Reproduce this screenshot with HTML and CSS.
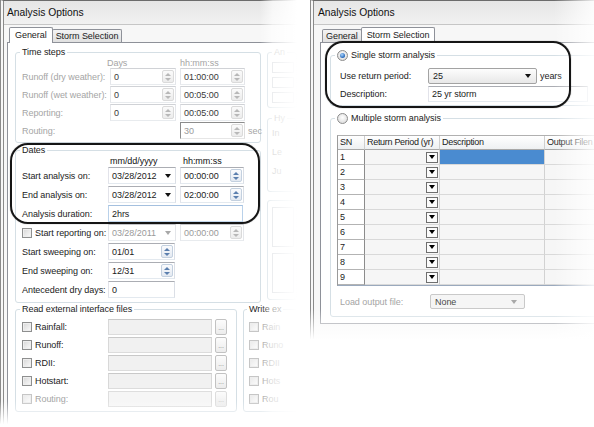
FILE: index.html
```html
<!DOCTYPE html>
<html lang="en">
<head>
<meta charset="utf-8">
<title>Analysis Options</title>
<link rel="stylesheet" href="styles.css">
</head>
<body>
<div class="stage">

  <div class="wrap wrap-l">
    <section class="dlg dlg-l">
      <div class="titlebar">Analysis Options</div>
      <div class="client">
        <div class="tabs">
          <div class="tab active">General</div>
          <div class="tab">Storm Selection</div>
        </div>
        <div class="page page-l">
          <div class="top-area">
            <div class="col-main">
              <div class="grp grp-time">
                <div class="grp-title">Time steps</div>
                <div class="hdr dis"><span class="lbl lbl-ts"></span><span class="hcol hc-days">Days</span><span class="hcol hc-time">hh:mm:ss</span></div>
                <div class="rows rows-ts">
                  <div class="row">
                    <span class="lbl lbl-ts dis">Runoff (dry weather):</span>
                    <div class="field off f-days"><span>0</span><span class="spin off"><i class="up"></i><i class="dn"></i></span></div>
                    <div class="field off f-time"><span>01:00:00</span><span class="spin off"><i class="up"></i><i class="dn"></i></span></div>
                  </div>
                  <div class="row">
                    <span class="lbl lbl-ts dis">Runoff (wet weather):</span>
                    <div class="field off f-days"><span>0</span><span class="spin off"><i class="up"></i><i class="dn"></i></span></div>
                    <div class="field off f-time"><span>00:05:00</span><span class="spin off"><i class="up"></i><i class="dn"></i></span></div>
                  </div>
                  <div class="row">
                    <span class="lbl lbl-ts dis">Reporting:</span>
                    <div class="field off f-days"><span>0</span><span class="spin off"><i class="up"></i><i class="dn"></i></span></div>
                    <div class="field off f-time"><span>00:05:00</span><span class="spin off"><i class="up"></i><i class="dn"></i></span></div>
                  </div>
                  <div class="row">
                    <span class="lbl lbl-ts dis">Routing:</span>
                    <span class="slot-days"></span>
                    <div class="field sunk f-time"><span class="dim">30</span><span class="spin off"><i class="up"></i><i class="dn"></i></span></div>
                    <span class="unit dis">sec</span>
                  </div>
                </div>
              </div>

              <div class="grp grp-dates">
                <div class="grp-title">Dates</div>
                <div class="hdr hdr-dt"><span class="lbl lbl-dt"></span><span class="hcol hc-date">mm/dd/yyyy</span><span class="hcol hc-time2">hh:mm:ss</span></div>
                <div class="rows rows-dt">
                  <div class="row">
                    <span class="lbl lbl-dt">Start analysis on:</span>
                    <div class="field f-date"><span>03/28/2012</span><span class="dd"></span></div>
                    <div class="field f-time2"><span>00:00:00</span><span class="spin"><i class="up"></i><i class="dn"></i></span></div>
                  </div>
                  <div class="row">
                    <span class="lbl lbl-dt">End analysis on:</span>
                    <div class="field f-date"><span>03/28/2012</span><span class="dd"></span></div>
                    <div class="field f-time2"><span>02:00:00</span><span class="spin"><i class="up"></i><i class="dn"></i></span></div>
                  </div>
                  <div class="row">
                    <span class="lbl lbl-dt">Analysis duration:</span>
                    <div class="field f-dur"><span>2hrs</span></div>
                  </div>
                  <div class="row">
                    <span class="lbl lbl-dt"><span class="chk"></span>Start reporting on:</span>
                    <div class="field off f-date"><span class="dim">03/28/2011</span><span class="dd off"></span></div>
                    <div class="field off f-time2"><span class="dim">00:00:00</span><span class="spin off"><i class="up"></i><i class="dn"></i></span></div>
                  </div>
                  <div class="row">
                    <span class="lbl lbl-dt">Start sweeping on:</span>
                    <div class="field f-sweep"><span>01/01</span><span class="spin"><i class="up"></i><i class="dn"></i></span></div>
                  </div>
                  <div class="row">
                    <span class="lbl lbl-dt">End sweeping on:</span>
                    <div class="field f-sweep"><span>12/31</span><span class="spin"><i class="up"></i><i class="dn"></i></span></div>
                  </div>
                  <div class="row">
                    <span class="lbl lbl-dt">Antecedent dry days:</span>
                    <div class="field f-sweep"><span>0</span></div>
                  </div>
                </div>
              </div>
            </div>

            <div class="col-side">
              <div class="grp grp-side">
                <div class="grp-title dis">An</div>
                <div class="sbox"></div>
                <div class="sbox"></div>
                <div class="sbox"></div>
              </div>
              <div class="grp grp-side grp-side2">
                <div class="grp-title dis">Hy</div>
                <div class="sline dis">In</div>
                <div class="sline dis">Le</div>
                <div class="sline dis">Ju</div>
              </div>
              <div class="grp grp-side grp-side3">
                <div class="sbox tall"></div>
                <div class="sbox tall"></div>
              </div>
            </div>
          </div>

          <div class="bottom-area">
            <div class="grp grp-read">
              <div class="grp-title">Read external interface files</div>
              <div class="rows rows-rd">
                <div class="row row-rd"><span class="lbl lbl-rd"><span class="chk"></span>Rainfall:</span><div class="field f-file"></div><span class="btn">...</span></div>
                <div class="row row-rd"><span class="lbl lbl-rd"><span class="chk"></span>Runoff:</span><div class="field f-file"></div><span class="btn">...</span></div>
                <div class="row row-rd"><span class="lbl lbl-rd"><span class="chk"></span>RDII:</span><div class="field f-file"></div><span class="btn">...</span></div>
                <div class="row row-rd"><span class="lbl lbl-rd"><span class="chk"></span>Hotstart:</span><div class="field f-file"></div><span class="btn">...</span></div>
                <div class="row row-rd"><span class="lbl lbl-rd dis"><span class="chk off"></span>Routing:</span><div class="field f-file off"></div><span class="btn off">...</span></div>
              </div>
            </div>
            <div class="grp grp-write">
              <div class="grp-title">Write ex</div>
              <div class="rows rows-rd">
                <div class="row row-rd"><span class="lbl dis"><span class="chk off"></span>Rain</span></div>
                <div class="row row-rd"><span class="lbl dis"><span class="chk off"></span>Runo</span></div>
                <div class="row row-rd"><span class="lbl dis"><span class="chk off"></span>RDII</span></div>
                <div class="row row-rd"><span class="lbl dis"><span class="chk off"></span>Hots</span></div>
                <div class="row row-rd"><span class="lbl dis"><span class="chk off"></span>Rou</span></div>
              </div>
            </div>
          </div>
        </div>
      </div>
    </section>
    <div class="fade fade-r"></div>
    <div class="fade fade-b"></div>
    <div class="hl hl-l"></div>
  </div>

  <div class="wrap wrap-r">
    <section class="dlg dlg-r">
      <div class="titlebar">Analysis Options</div>
      <div class="client">
        <div class="tabs">
          <div class="tab">General</div>
          <div class="tab active">Storm Selection</div>
        </div>
        <div class="page page-r">
          <div class="grp grp-single">
            <div class="grp-title gt-radio"><span class="radio on"></span>Single storm analysis</div>
            <div class="rows rows-ss">
              <div class="row row-ss">
                <span class="lbl lbl-ss">Use return period:</span>
                <div class="select"><span>25</span><span class="dd"></span></div>
                <span class="unit">years</span>
              </div>
              <div class="row row-ss">
                <span class="lbl lbl-ss">Description:</span>
                <div class="field f-desc"><span>25 yr storm</span></div>
              </div>
            </div>
          </div>

          <div class="grp grp-multi">
            <div class="grp-title gt-radio2"><span class="radio"></span>Multiple storm analysis</div>
            <div class="grid">
              <div class="gh">SN</div><div class="gh">Return Period (yr)</div><div class="gh">Description</div><div class="gh">Output Filen</div>
              <div class="gc sn">1</div><div class="gc rp"><span class="ddb"></span></div><div class="gc sel"></div><div class="gc"></div>
              <div class="gc sn">2</div><div class="gc rp"><span class="ddb"></span></div><div class="gc"></div><div class="gc"></div>
              <div class="gc sn">3</div><div class="gc rp"><span class="ddb"></span></div><div class="gc"></div><div class="gc"></div>
              <div class="gc sn">4</div><div class="gc rp"><span class="ddb"></span></div><div class="gc"></div><div class="gc"></div>
              <div class="gc sn">5</div><div class="gc rp"><span class="ddb"></span></div><div class="gc"></div><div class="gc"></div>
              <div class="gc sn">6</div><div class="gc rp"><span class="ddb"></span></div><div class="gc"></div><div class="gc"></div>
              <div class="gc sn">7</div><div class="gc rp"><span class="ddb"></span></div><div class="gc"></div><div class="gc"></div>
              <div class="gc sn">8</div><div class="gc rp"><span class="ddb"></span></div><div class="gc"></div><div class="gc"></div>
              <div class="gc sn">9</div><div class="gc rp"><span class="ddb"></span></div><div class="gc"></div><div class="gc"></div>
            </div>
            <div class="row row-load">
              <span class="lbl lbl-lo dis">Load output file:</span>
              <div class="select off"><span>None</span><span class="dd off"></span></div>
            </div>
          </div>
        </div>
      </div>
    </section>
    <div class="fade fade-r"></div>
    <div class="fade fade-b"></div>
    <div class="hl hl-r"></div>
  </div>

</div>
</body>
</html>
```

FILE: styles.css
```css
* { box-sizing: border-box; }
html, body { margin: 0; padding: 0; }
body {
  width: 594px; height: 427px; overflow: hidden; background: #fff;
  font-family: "Liberation Sans", Arial, sans-serif;
  font-size: 9px; line-height: 12px; color: #1b1b1b; letter-spacing: -0.05px;
}
.stage { display: flex; align-items: flex-start; width: 594px; height: 427px; overflow: hidden; }

.wrap { position: relative; flex: none; overflow: hidden; }
.wrap-l { width: 302px; height: 427px; }
.wrap-r { width: 284px; height: 345px; margin-left: 8px; }

.dlg {
  width: 310px; height: 100%;
  border-left: 4px double #8a8a8a; border-top: 1px solid #6c6c6c;
  background: #f7f7f7; overflow: hidden;
}
.titlebar {
  height: 24px; border-bottom: 1px solid #c6c6c6;
  background: linear-gradient(#e6e6e6, #f1f1f1);
  display: flex; align-items: center; padding-left: 3px;
  font-size: 10.3px; color: #111; white-space: nowrap; letter-spacing: 0;
}
.dlg-r .titlebar { padding-left: 4px; }
.client { padding-left: 3px; }
.dlg-r .client { padding-left: 6px; }

.tabs { display: flex; align-items: flex-end; height: 17px; padding-left: 2px; }
.tab {
  height: 13px; padding: 0 3px; border: 1px solid #8e9199; border-bottom: none;
  border-radius: 2px 2px 0 0; background: linear-gradient(#f4f4f4, #e0e0e0);
  line-height: 12px; margin-right: -1px; white-space: nowrap;
}
.tab.active {
  position: relative; z-index: 1; height: 16px; margin-bottom: -1px;
  background: #fff; padding: 1px 5px 0;
}
.page { background: #fff; border: 1px solid #8e9199; }
.page-l { padding: 9px 0 0 7px; height: 400px; }
.page-r { padding: 12px 0 6px 9px; }

/* group boxes */
.grp { border: 1px solid #d5dfe5; border-radius: 3px; flex: none; }
.grp-title {
  width: max-content; margin: -7px 0 0 -2px; padding: 0 2px; height: 12px;
  line-height: 12px; background: #fff; white-space: nowrap;
  display: flex; align-items: center;
}
.dis { color: #a5a5a5; }
.dim { color: #9a9a9a; }

.top-area, .bottom-area { display: flex; width: max-content; }
.col-main { width: 246px; flex: none; }
.grp-time { padding: 0 6px 3px; }
.grp-dates { padding: 0 6px 4px; margin-top: 7px; }

.hdr { display: flex; height: 10px; line-height: 10px; white-space: nowrap; }
.hdr-dt { height: 11px; line-height: 11px; color: #111; }
.hcol { flex: none; }
.hc-days { width: 70px; margin-left: -3px; }
.hc-time { padding-left: 3px; }
.hc-date { width: 72px; padding-left: 2px; }
.hc-time2 { padding-left: 3px; }

.rows { display: flex; flex-direction: column; }
.rows-ts { gap: 1px; }
.rows-dt { gap: 2px; }
.row { display: flex; align-items: center; height: 17px; white-space: nowrap; }
.lbl { display: flex; align-items: center; flex: none; }
.lbl-ts { width: 88px; }
.lbl-dt { width: 86px; }
.lbl-rd { width: 86px; }
.slot-days { width: 70px; flex: none; }
.unit { margin-left: 3px; }

/* text fields */
.field {
  display: flex; align-items: center; justify-content: space-between; flex: none;
  height: 17px; padding: 0 1px 0 3px; background: #fff;
  border: 1px solid; border-color: #abadb3 #dbdfe6 #e3e9ef #e2e3ea;
  color: #1b1b1b;
}
.field.off { border-color: #d0d2d6 #e4e6ea #e8ebee #e4e6ea; color: #3a3a3a; }
.field.sunk { border-color: #8c8c8c #dedede #e6e6e6 #8c8c8c; }
.f-days { width: 66px; margin-right: 4px; }
.f-time { width: 65px; }
.f-date { width: 68px; margin-right: 4px; }
.f-time2 { width: 64px; }
.f-dur { width: 135px; border-color: #a4c0df #b9d1ea #c5d9ee #b9d1ea; }
.f-sweep { width: 67px; }
.f-file { width: 104px; height: 16px; background: #f1f1f1; border-color: #c9c9c9 #d8d8d8 #dcdcdc #d8d8d8; }
.f-file.off { background: #f6f6f6; border-color: #dedede; }
.f-desc { width: 160px; height: 16px; }

.spin {
  display: flex; flex-direction: column; justify-content: center; align-items: center;
  gap: 2px; width: 12px; height: 13px; border: 1px solid #c3d0df; border-radius: 2px;
  background: linear-gradient(#fafbfd, #e3e9f1); flex: none;
}
.spin i { display: block; width: 0; height: 0; border-left: 3px solid transparent; border-right: 3px solid transparent; }
.spin .up { border-bottom: 3px solid #5b7fae; }
.spin .dn { border-top: 3px solid #5b7fae; }
.spin.off { border-color: #dadada; background: linear-gradient(#fbfbfb, #ececec); }
.spin.off .up { border-bottom-color: #b8b8b8; }
.spin.off .dn { border-top-color: #b8b8b8; }

.dd {
  width: 0; height: 0; flex: none; margin-right: 3px;
  border-left: 3.5px solid transparent; border-right: 3.5px solid transparent;
  border-top: 4px solid #111;
}
.dd.off { border-top-color: #a8a8a8; }

.chk {
  width: 10px; height: 10px; flex: none; margin-right: 3px;
  border: 1px solid #8e8f8f; background: linear-gradient(135deg, #d6d6d6, #fbfbfb);
  box-shadow: inset 0 0 0 1px #eeeeee;
}
.chk.off { border-color: #c6c6c6; background: linear-gradient(135deg, #e9e9e9, #fdfdfd); }

.btn {
  width: 12px; height: 16px; margin-left: 3px; flex: none;
  border: 1px solid #c2c2c2; border-radius: 2px; background: linear-gradient(#fcfcfc, #ececec);
  font-size: 7px; line-height: 8px; color: #8a8a8a; text-align: center; padding-top: 4px;
}
.btn.off { border-color: #dddddd; color: #c4c4c4; }

/* left dialog: side column and bottom */
.col-side { width: 30px; margin-left: 6px; flex: none; }
.grp-side { padding: 0 4px 4px; }
.grp-side .grp-title { margin-left: 0; }
.sbox { width: 22px; height: 11px; border: 1px solid #c8ccd2; margin-top: 4px; }
.sbox.tall { height: 40px; margin-top: 6px; }
.grp-side2 { margin-top: 10px; padding-bottom: 10px; }
.sline { height: 19px; line-height: 19px; white-space: nowrap; }
.grp-side3 { margin-top: 8px; padding-bottom: 6px; }

.bottom-area { margin-top: 6px; }
.grp-read { width: 222px; padding: 0 6px 4px; }
.grp-write { width: 56px; margin-left: 6px; padding: 0 5px 4px; }
.rows-rd { gap: 2px; margin-top: 4px; }
.row-rd { height: 16px; }

/* right dialog */
.grp-single { width: 300px; padding: 0 0 3px 9px; }
.gt-radio { margin-left: -5px; }
.rows-ss { gap: 2px; margin-top: 7px; }
.row-ss { height: 16px; }
.lbl-ss { width: 88px; }
.select {
  display: flex; align-items: center; justify-content: space-between; flex: none;
  width: 109px; height: 16px; padding: 0 2px 0 4px;
  border: 1px solid #a3a3a3; border-radius: 2px; background: linear-gradient(#fdfdfd, #e8e8e8);
}
.select.off { width: 95px; height: 15px; border-color: #c9c9c9; background: #f5f5f5; color: #4a4a4a; padding-right: 4px; }

.grp-multi { width: 300px; margin-top: 12px; padding: 0 0 7px 6px; }
.gt-radio2 { margin-left: -2px; }
.radio {
  width: 11px; height: 11px; border-radius: 50%; flex: none; margin-right: 3px;
  border: 1px solid #8c8c8c; background: radial-gradient(circle at 50% 40%, #ffffff 0, #d4d4d4 100%);
  display: flex; align-items: center; justify-content: center;
}
.radio.on::after {
  content: ""; width: 5px; height: 5px; border-radius: 50%;
  background: radial-gradient(circle at 40% 35%, #a9d6ff 0, #2566b8 70%);
}

.grid {
  display: grid; grid-template-columns: 27px 75px 105px 120px;
  grid-template-rows: 14px repeat(9, 15px);
  width: max-content; margin-top: 11px;
  border-left: 1px solid #9a9a9a; border-top: 1px solid #b0b0b0; border-bottom: 1px solid #9aa9bd;
}
.gh {
  border-right: 1px solid #cfcfcf; border-bottom: 1px solid #a8a8a8;
  background: linear-gradient(#ffffff, #eef0f2); padding-left: 2px; line-height: 13px; white-space: nowrap;
  letter-spacing: -0.3px;
}
.gc { border-right: 1px solid #d2d2d2; border-bottom: 1px solid #d9d9d9; background: #f6f6f6; }
.gc.sn { background: #fff; border-right-color: #8c8c8c; border-bottom-color: #b3b3b3; padding-left: 2px; line-height: 14px; }
.gc.rp { display: flex; align-items: center; justify-content: flex-end; padding-right: 1px; }
.gc.sel { background: #4a8bd0; }
.ddb {
  width: 12px; height: 11px; border: 1px solid #6f6f6f; background: #fbfbfb;
  display: flex; align-items: center; justify-content: center;
}
.ddb::after {
  content: ""; width: 0; height: 0;
  border-left: 3.5px solid transparent; border-right: 3.5px solid transparent; border-top: 4px solid #000;
}
.row-load { height: 15px; margin-top: 8px; }
.lbl-lo { width: 90px; margin-left: 3px; }

/* overlays */
.fade { position: absolute; z-index: 5; pointer-events: none; }
.wrap-l .fade-r { top: 0; right: 0; width: 42px; height: 100%; background: linear-gradient(to right, rgba(255,255,255,0), rgba(255,255,255,.65) 30%, #fff 88%); }
.wrap-l .fade-b { left: 0; bottom: 0; width: 100%; height: 26px; background: linear-gradient(rgba(255,255,255,0), #fff 90%); }
.wrap-r .fade-r { top: 0; right: 0; width: 40px; height: 100%; background: linear-gradient(to right, rgba(255,255,255,0), rgba(255,255,255,.55) 60%, rgba(255,255,255,.85)); }
.wrap-r .fade-b { left: 0; bottom: 0; width: 100%; height: 36px; background: linear-gradient(rgba(255,255,255,0), #fff 85%); }

.hl {
  position: absolute; z-index: 6; border: 2px solid #151515; border-radius: 18px;
  box-shadow: 0 0 1px rgba(0,0,0,.6);
}
.hl-l { left: 10px; top: 143px; width: 250px; height: 81px; }
.hl-r { left: 15px; top: 41px; width: 246px; height: 67px; }
```
